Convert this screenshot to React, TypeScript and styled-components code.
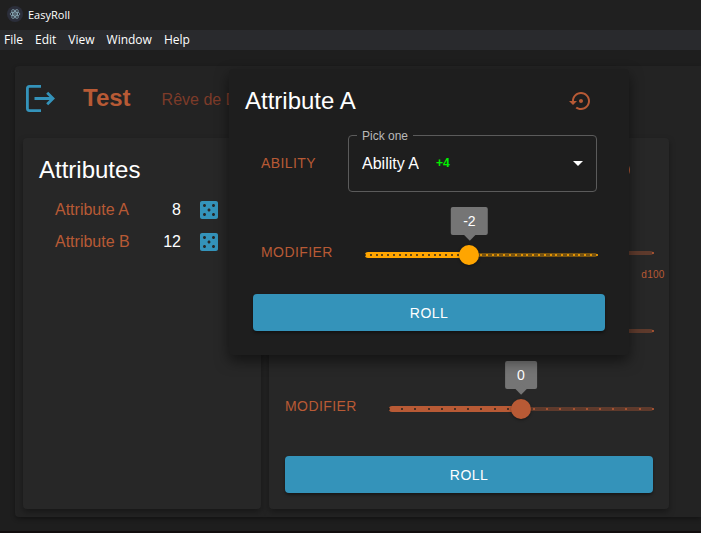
import React, { useState } from "react";
import styled, { createGlobalStyle } from "styled-components";

const palette = {
  primary: "#3493ba",
  rust: "#b85a35",
  rustDim: "#7d3b29",
  orange: "#ffa500",
};

const GlobalStyle = createGlobalStyle`
  *, *::before, *::after { box-sizing: border-box; }
  body {
    margin: 0;
    background: #1e1e1e;
    color: #fff;
    font-family: "Liberation Sans", Arial, sans-serif;
    font-size: 16px;
    overflow: hidden;
  }
  h1, h2, p { margin: 0; }
  button, input { font-family: inherit; }
`;

const AppWindow = styled.div`
  position: relative;
  display: flex;
  flex-direction: column;
  min-height: 100vh;
  overflow: hidden;
  border-bottom: 2px solid #110d0e;
`;

const TitleBar = styled.header`
  display: flex;
  align-items: center;
  gap: 5px;
  height: 30px;
  padding: 0 0 2px 7px;
  background: #202020;
  font-family: "Open Sans", "Noto Sans", sans-serif;
  font-size: 11px;
`;

const MenuBar = styled.nav`
  display: flex;
  align-items: center;
  gap: 12px;
  height: 20px;
  padding-left: 4px;
  background: #292a2d;
`;

const MenuItem = styled.button`
  padding: 0;
  border: 0;
  background: none;
  color: #fff;
  font-family: "Open Sans", "Noto Sans", sans-serif;
  font-size: 12px;
  line-height: 20px;
`;

const Content = styled.main`
  display: flex;
  flex: 1;
  padding: 16px 0 14px 15px;
`;

const Sheet = styled.section`
  display: flex;
  flex: 1;
  flex-direction: column;
  padding: 0 8px 8px;
  border-radius: 4px 0 0 4px;
  background: #232323;
  box-shadow: 0 2px 4px rgba(0, 0, 0, 0.35);
`;

const SheetHeader = styled.div`
  display: flex;
  align-items: center;
  height: 72px;
  padding-bottom: 8px;
`;

const Title = styled.h1`
  margin: 0 31px 0 26px;
  color: ${palette.rust};
  font-size: 24px;
  line-height: 32px;
`;

const Subtitle = styled.p`
  color: ${palette.rustDim};
  line-height: 24px;
  padding-top: 4px;
`;

const Panels = styled.div`
  display: flex;
  flex: 1;
  gap: 8px;
`;

const Panel = styled.section<{ $basis: number }>`
  display: flex;
  flex: 0 0 ${(p) => p.$basis}px;
  flex-direction: column;
  padding: 16px;
  border-radius: 4px;
  background: #272727;
  box-shadow: 0 3px 6px rgba(0, 0, 0, 0.35);
`;

const Heading = styled.h2`
  font-size: 24px;
  font-weight: 400;
  line-height: 32px;
`;

const AttributeList = styled.div`
  padding: 8px 24px 0 16px;
`;

const AttributeRow = styled.div`
  display: flex;
  align-items: center;
  height: 32px;
`;

const AttributeName = styled.span`
  flex: 1;
  color: ${palette.rust};
`;

const AttributeValue = styled.span`
  margin-right: 16px;
`;

const IconButton = styled.button<{ $color: string; $pad?: number }>`
  display: flex;
  padding: ${(p) => p.$pad ?? 0}px;
  border: 0;
  background: none;
  color: ${(p) => p.$color};
`;

const CardHeader = styled.div`
  display: flex;
  align-items: center;
  justify-content: space-between;
  height: 32px;
  padding-right: 12px;
`;

const Fields = styled.div`
  display: flex;
  flex: 1;
  flex-direction: column;
  justify-content: flex-end;
  padding-bottom: 11px;
`;

const FieldRow = styled.div<{ $height: number }>`
  display: flex;
  align-items: center;
  height: ${(p) => p.$height}px;
`;

const FieldLabel = styled.label<{ $width: number }>`
  flex: 0 0 ${(p) => p.$width}px;
  color: ${palette.rust};
  font-size: 14px;
  letter-spacing: 0.03em;
  line-height: 24px;
  text-transform: uppercase;
`;

const RollButton = styled.button`
  height: 37px;
  border: 0;
  border-radius: 4px;
  background: ${palette.primary};
  box-shadow: 0 2px 3px rgba(0, 0, 0, 0.4);
  color: #fff;
  font-size: 14px;
  letter-spacing: 0.03em;
  text-transform: uppercase;
`;

const SliderBox = styled.div`
  position: relative;
  flex: 1;
  height: 20px;
  margin-top: 6px;
`;

const Rail = styled.div<{ $color: string }>`
  position: absolute;
  inset: 8px 0;
  border-radius: 2px;
  background: ${(p) => p.$color};
  opacity: 0.38;
`;

const Fill = styled.div<{ $color: string }>`
  position: absolute;
  top: 7px;
  left: 0;
  height: 6px;
  border-radius: 3px;
  background: ${(p) => p.$color};
`;

const Marks = styled.div`
  position: absolute;
  inset: 9px -1px;
  display: flex;
  justify-content: space-between;
`;

const Mark = styled.span<{ $color: string; $active: boolean }>`
  width: 2px;
  height: 2px;
  background: ${(p) => (p.$active ? "#1e1e1e" : p.$color)};
  opacity: ${(p) => (p.$active ? 0.7 : 0.8)};
`;

const Range = styled.input<{ $color: string }>`
  position: absolute;
  top: 0;
  left: -10px;
  width: calc(100% + 20px);
  height: 20px;
  margin: 0;
  background: none;
  appearance: none;
  &::-webkit-slider-thumb {
    width: 20px;
    height: 20px;
    border-radius: 50%;
    background: ${(p) => p.$color};
    box-shadow: 0 1px 3px rgba(0, 0, 0, 0.4);
    appearance: none;
  }
`;

const ValueBubble = styled.output`
  position: absolute;
  bottom: 30px;
  padding: 4px 12px;
  border-radius: 2px;
  background: #757575;
  font-size: 14px;
  line-height: 20px;
  transform: translateX(-50%);
  &::after {
    content: "";
    position: absolute;
    bottom: -4px;
    left: calc(50% - 4px);
    width: 8px;
    height: 8px;
    background: inherit;
    transform: rotate(45deg);
  }
`;

const EndLabel = styled.span`
  position: absolute;
  top: 25px;
  left: 100%;
  color: ${palette.rust};
  font-size: 10px;
  letter-spacing: 0.03em;
  line-height: 14px;
  transform: translateX(-50%);
`;

const Dialog = styled.div`
  position: absolute;
  top: 69px;
  left: 229px;
  display: flex;
  flex-direction: column;
  width: 400px;
  padding: 16px 24px 24px;
  border-radius: 4px;
  background: #1e1e1e;
  box-shadow: 0 6px 14px rgba(0, 0, 0, 0.5);
`;

const DialogHeader = styled(CardHeader)`
  margin-left: -8px;
  padding-right: 4px;
`;

const DialogFields = styled.div`
  padding: 0 8px;
`;

const SelectFrame = styled.fieldset`
  position: relative;
  flex: 1;
  display: flex;
  align-items: center;
  height: 63px;
  min-width: 0;
  margin: 0 0 6px;
  padding: 0 12px 7px 13px;
  border: 1px solid #5b5b5b;
  border-radius: 4px;
`;

const SelectLegend = styled.legend`
  margin-left: -5px;
  padding: 0 5px;
  color: #b9b9b9;
  font-size: 12px;
  line-height: 14px;
`;

const SelectLine = styled.div`
  display: flex;
  flex: 1;
  align-items: center;
  height: 100%;
`;

const Select = styled.select`
  field-sizing: content;
  padding: 0;
  border: 0;
  background: transparent;
  color: #fff;
  font-family: inherit;
  font-size: 16px;
  appearance: none;
`;

const Bonus = styled.span`
  flex: 1;
  margin-left: 17px;
  color: #00f000;
  font-size: 12px;
  font-weight: 700;
`;

const AppLogo = () => (
  <svg width="16" height="16" viewBox="0 0 32 32" aria-hidden="true">
    <circle cx="16" cy="16" r="16" fill="#2b2e3a" />
    <g fill="none" stroke="#8fb0bc" strokeWidth="1.5">
      <ellipse cx="16" cy="16" rx="10" ry="4" />
      <ellipse cx="16" cy="16" rx="10" ry="4" transform="rotate(60 16 16)" />
      <ellipse cx="16" cy="16" rx="10" ry="4" transform="rotate(120 16 16)" />
    </g>
    <circle cx="16" cy="16" r="1.6" fill="#8fb0bc" />
  </svg>
);

const ExitIcon = () => (
  <svg width="34" height="32" viewBox="0 0 34 32" fill="none" stroke="currentColor" strokeWidth="2.8" aria-hidden="true">
    <path d="M18 4.400H6.400Q4.400 4.400 4.400 6.400V26.600Q4.400 28.600 6.400 28.600H18" />
    <path d="M11.500 16.500H30M24.200 10.700L30 16.500L24.200 22.300" />
  </svg>
);

const DieIcon = () => (
  <svg width="24" height="24" viewBox="0 0 24 24" fill="currentColor" aria-hidden="true">
    <path d="M19 3H5c-1.100 0-2 .9-2 2v14c0 1.100.9 2 2 2h14c1.100 0 2-.9 2-2V5c0-1.100-.9-2-2-2zM7.500 18c-.83 0-1.500-.67-1.500-1.500S6.670 15 7.500 15s1.500.67 1.500 1.500S8.330 18 7.500 18zm0-9C6.670 9 6 8.330 6 7.500S6.670 6 7.500 6 9 6.670 9 7.500 8.330 9 7.500 9zm4.500 4.500c-.83 0-1.500-.67-1.500-1.500s.67-1.500 1.500-1.500 1.500.67 1.500 1.500-.67 1.500-1.500 1.500zm4.500 4.500c-.83 0-1.500-.67-1.500-1.500s.67-1.500 1.500-1.500 1.500.67 1.500 1.500-.67 1.500-1.500 1.500zm0-9c-.83 0-1.500-.67-1.500-1.500S15.670 6 16.500 6s1.500.67 1.500 1.500S17.330 9 16.500 9z" />
  </svg>
);

const ResetIcon = () => (
  <svg width="24" height="24" viewBox="0 0 24 24" fill="currentColor" aria-hidden="true">
    <path d="M14 12c0-1.100-.9-2-2-2s-2 .9-2 2 .9 2 2 2 2-.9 2-2zm-2-9c-4.970 0-9 4.030-9 9H0l4 4 4-4H5c0-3.870 3.130-7 7-7s7 3.130 7 7-3.130 7-7 7c-1.510 0-2.910-.49-4.060-1.300l-1.420 1.440C8.040 20.300 9.940 21 12 21c4.970 0 9-4.030 9-9s-4.030-9-9-9z" />
  </svg>
);

const ArrowDown = () => (
  <svg width="12" height="12" viewBox="0 0 12 12" aria-hidden="true">
    <path d="M1 4L6 9L11 4Z" fill="#fff" />
  </svg>
);

interface SliderProps {
  id: string;
  label?: string;
  min: number;
  max: number;
  initial: number;
  color: string;
  marks?: boolean;
  bubble?: boolean;
  endLabel?: string;
}

function Slider({ id, label, min, max, initial, color, marks, bubble, endLabel }: SliderProps) {
  const [value, setValue] = useState(initial);
  const percent = `${((value - min) / (max - min)) * 100}%`;
  const steps = marks
    ? Array.from({ length: max - min + 1 }, (_, i) => min + i)
    : [min, max];
  return (
    <SliderBox>
      <Rail $color={color} />
      <Fill $color={color} style={{ width: percent }} />
      <Marks>
        {steps.map((step) => (
          <Mark key={step} $color={color} $active={step <= value} />
        ))}
      </Marks>
      <Range
        id={id}
        aria-label={label}
        type="range"
        min={min}
        max={max}
        value={value}
        $color={color}
        onChange={(e) => setValue(Number(e.target.value))}
      />
      {bubble && (
        <ValueBubble htmlFor={id} style={{ left: percent }}>
          {value}
        </ValueBubble>
      )}
      {endLabel && <EndLabel>{endLabel}</EndLabel>}
    </SliderBox>
  );
}

const menus = ["File", "Edit", "View", "Window", "Help"];
const attributes = [
  { name: "Attribute A", value: 8 },
  { name: "Attribute B", value: 12 },
];

export default function App() {
  return (
    <>
      <GlobalStyle />
      <AppWindow>
        <TitleBar>
          <AppLogo />
          <span>EasyRoll</span>
        </TitleBar>
        <MenuBar>
          {menus.map((menu) => (
            <MenuItem key={menu}>{menu}</MenuItem>
          ))}
        </MenuBar>
        <Content>
          <Sheet>
            <SheetHeader>
              <IconButton $color={palette.primary} aria-label="Leave">
                <ExitIcon />
              </IconButton>
              <Title>Test</Title>
              <Subtitle>Rêve de Dragon</Subtitle>
            </SheetHeader>
            <Panels>
              <Panel $basis={238}>
                <Heading>Attributes</Heading>
                <AttributeList>
                  {attributes.map(({ name, value }) => (
                    <AttributeRow key={name}>
                      <AttributeName>{name}</AttributeName>
                      <AttributeValue>{value}</AttributeValue>
                      <IconButton $color={palette.primary} aria-label={`Roll ${name}`}>
                        <DieIcon />
                      </IconButton>
                    </AttributeRow>
                  ))}
                </AttributeList>
              </Panel>
              <Panel $basis={400}>
                <CardHeader>
                  <span />
                  <IconButton $color={palette.rust} $pad={8} aria-label="Reset roll">
                    <ResetIcon />
                  </IconButton>
                </CardHeader>
                <Fields>
                  <FieldRow $height={78}>
                    <FieldLabel as="span" $width={104} />
                    <Slider id="dice" label="Dice" min={0} max={100} initial={50} color={palette.rust} endLabel="d100" />
                  </FieldRow>
                  <FieldRow $height={78}>
                    <FieldLabel as="span" $width={104} />
                    <Slider id="ability" label="Ability" min={0} max={100} initial={50} color={palette.rust} />
                  </FieldRow>
                  <FieldRow $height={78}>
                    <FieldLabel htmlFor="modifier" $width={104}>
                      Modifier
                    </FieldLabel>
                    <Slider id="modifier" min={-10} max={10} initial={0} color={palette.rust} marks bubble />
                  </FieldRow>
                </Fields>
                <RollButton>Roll</RollButton>
              </Panel>
            </Panels>
          </Sheet>
        </Content>
        <Dialog role="dialog" aria-labelledby="dialog-title">
          <DialogHeader>
            <Heading id="dialog-title">Attribute A</Heading>
            <IconButton $color={palette.rust} $pad={8} aria-label="Reset">
              <ResetIcon />
            </IconButton>
          </DialogHeader>
          <DialogFields>
            <FieldRow $height={92}>
              <FieldLabel htmlFor="dialog-ability" $width={87}>
                Ability
              </FieldLabel>
              <SelectFrame>
                <SelectLegend>Pick one</SelectLegend>
                <SelectLine>
                  <Select id="dialog-ability">
                    <option>Ability A</option>
                  </Select>
                  <Bonus>+4</Bonus>
                  <ArrowDown />
                </SelectLine>
              </SelectFrame>
            </FieldRow>
            <FieldRow $height={85}>
              <FieldLabel htmlFor="dialog-modifier" $width={104}>
                Modifier
              </FieldLabel>
              <Slider id="dialog-modifier" min={-20} max={20} initial={-2} color={palette.orange} marks bubble />
            </FieldRow>
          </DialogFields>
          <RollButton>Roll</RollButton>
        </Dialog>
      </AppWindow>
    </>
  );
}
